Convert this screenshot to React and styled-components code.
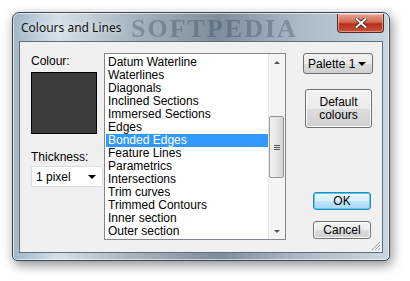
import React from "react";
import styled, { createGlobalStyle } from "styled-components";

const GlobalStyle = createGlobalStyle`
  html, body {
    margin: 0;
    padding: 0;
    background: #ffffff;
  }
  body {
    width: 410px;
    height: 281px;
    overflow: hidden;
    font-family: "Liberation Sans", Arial, sans-serif;
  }
`;

const Page = styled.div`
  padding: 12px 0 0 12px;
`;

const Window = styled.div`
  position: relative;
  width: 378px;
  height: 249px;
  box-sizing: border-box;
  border: 1px solid #3a4a58;
  border-radius: 7px 7px 5px 5px;
  background: linear-gradient(
    90deg,
    #9fb6c8 0%,
    #d5e0e9 12%,
    #aab8c3 30%,
    #7d8d99 55%,
    #a9b8c4 75%,
    #c9d6e1 100%
  );
  box-shadow: 2px 4px 12px rgba(0, 0, 0, 0.45), inset 0 0 0 1px rgba(255, 255, 255, 0.6);
  display: flex;
  flex-direction: column;
  padding: 0 6px 7px 6px;
`;

const TitleBar = styled.div`
  position: relative;
  height: 28px;
  display: flex;
  align-items: center;
  justify-content: space-between;
`;

const Title = styled.span`
  font-family: "Noto Sans", "Open Sans", sans-serif;
  font-size: 12px;
  color: #111;
  padding-left: 2px;
  position: relative;
  z-index: 1;
  text-shadow: 0 0 6px rgba(255, 255, 255, 0.9);
`;

const Watermark = styled.span`
  position: absolute;
  left: 112px;
  top: 1px;
  font-family: "Liberation Serif", serif;
  font-weight: bold;
  font-size: 26px;
  letter-spacing: 2px;
  color: rgba(40, 55, 70, 0.3);
  filter: blur(0.6px);
`;

const CloseButton = styled.div`
  position: relative;
  z-index: 1;
  width: 45px;
  height: 18px;
  margin-top: -8px;
  margin-right: -1px;
  border: 1px solid #5a2a22;
  border-top: none;
  border-radius: 0 0 4px 4px;
  background: linear-gradient(180deg, #e8a493 0%, #d46a52 45%, #b5301a 55%, #c8533a 100%);
  box-shadow: inset 0 0 0 1px rgba(255, 220, 210, 0.5);
  display: flex;
  align-items: center;
  justify-content: center;
`;

const Client = styled.div`
  flex: 1;
  position: relative;
  background: #f0f0f0;
  border: 1px solid #5e6e7a;
  display: flex;
  padding: 11px 0 0 11px;
  box-sizing: border-box;
`;

const LeftColumn = styled.div`
  width: 71px;
  display: flex;
  flex-direction: column;
`;

const Label = styled.div`
  font-size: 12px;
  color: #000;
  height: 14px;
  line-height: 14px;
  margin-top: ${(p) => p.$top || 0}px;
`;

const Swatch = styled.div`
  width: 64px;
  height: 60px;
  margin-top: 4px;
  background: #3c3c3c;
  border: 1px solid #000;
`;

const Combo = styled.div`
  margin-top: ${(p) => p.$top || 0}px;
  width: ${(p) => p.$width}px;
  height: ${(p) => p.$height}px;
  box-sizing: border-box;
  display: flex;
  align-items: center;
  justify-content: space-between;
  padding: 0 6px 0 4px;
  font-size: 12px;
  color: #000;
  border: 1px solid ${(p) => (p.$button ? "#707070" : "#dcdcdc")};
  border-radius: ${(p) => (p.$button ? 3 : 1)}px;
  background: ${(p) =>
    p.$button ? "linear-gradient(180deg, #f2f2f2 0%, #ebebeb 50%, #dddddd 51%, #cfcfcf 100%)" : "#ffffff"};
`;

const Arrow = styled.span`
  width: 0;
  height: 0;
  border-left: 4px solid transparent;
  border-right: 4px solid transparent;
  border-top: 4px solid #000;
`;

const ListBox = styled.div`
  margin-left: 2px;
  width: 182px;
  height: 187px;
  box-sizing: border-box;
  border: 1px solid #828790;
  background: #fff;
  display: flex;
`;

const Items = styled.div`
  flex: 1;
  padding: 2px 0 0 1px;
`;

const Item = styled.div`
  height: 13px;
  line-height: 13px;
  font-size: 12px;
  padding-left: 2px;
  color: ${(p) => (p.$selected ? "#fff" : "#000")};
  background: ${(p) => (p.$selected ? "#3399ff" : "transparent")};
  white-space: nowrap;
`;

const ScrollBar = styled.div`
  width: 16px;
  background: #f4f4f4;
  border-left: 1px solid #e8e8e8;
  display: flex;
  flex-direction: column;
  align-items: center;
`;

const ScrollArrow = styled.div`
  height: 16px;
  width: 100%;
  display: flex;
  align-items: center;
  justify-content: center;
`;

const ArrowUp = styled.span`
  width: 0;
  height: 0;
  border-left: 3px solid transparent;
  border-right: 3px solid transparent;
  border-bottom: 3px solid #555;
`;

const ArrowDown = styled(ArrowUp)`
  border-bottom: none;
  border-top: 3px solid #555;
`;

const Track = styled.div`
  flex: 1;
  width: 100%;
  display: flex;
  flex-direction: column;
`;

const Thumb = styled.div`
  margin-top: ${(p) => p.$top}px;
  height: ${(p) => p.$height}px;
  width: 15px;
  box-sizing: border-box;
  border: 1px solid #979797;
  border-radius: 2px;
  background: linear-gradient(90deg, #f2f2f2 0%, #e6e6e6 50%, #d3d3d3 100%);
  display: flex;
  flex-direction: column;
  align-items: center;
  justify-content: center;
  gap: 1px;
`;

const Grip = styled.span`
  width: 6px;
  height: 1px;
  background: #555;
`;

const RightColumn = styled.div`
  margin-left: 17px;
  width: 70px;
  display: flex;
  flex-direction: column;
  align-items: flex-end;
`;

const Button = styled.div`
  margin-top: ${(p) => p.$top || 0}px;
  margin-right: ${(p) => p.$right || 0}px;
  width: ${(p) => p.$width}px;
  height: ${(p) => p.$height}px;
  box-sizing: border-box;
  border: 1px solid ${(p) => (p.$default ? "#3c7fb1" : "#707070")};
  border-radius: 3px;
  background: ${(p) =>
    p.$default
      ? "linear-gradient(180deg, #eaf6fd 0%, #d9f0fc 50%, #bee6fd 51%, #a7d9f5 100%)"
      : "linear-gradient(180deg, #f2f2f2 0%, #ebebeb 50%, #dddddd 51%, #cfcfcf 100%)"};
  box-shadow: ${(p) => (p.$default ? "inset 0 0 0 1px #48d1f9" : "inset 0 0 0 1px #fcfcfc")};
  display: flex;
  align-items: center;
  justify-content: center;
  text-align: center;
  font-size: 12px;
  line-height: 13px;
  color: #000;
`;

const ResizeGrip = styled.svg`
  position: absolute;
  right: 1px;
  bottom: 1px;
`;

const items = [
  "Datum Waterline",
  "Waterlines",
  "Diagonals",
  "Inclined Sections",
  "Immersed Sections",
  "Edges",
  "Bonded Edges",
  "Feature Lines",
  "Parametrics",
  "Intersections",
  "Trim curves",
  "Trimmed Contours",
  "Inner section",
  "Outer section",
];

export default function App() {
  return (
    <Page>
      <GlobalStyle />
      <Window>
        <TitleBar>
          <Watermark>SOFTPEDIA</Watermark>
          <Title>Colours and Lines</Title>
          <CloseButton>
            <svg width="12" height="10" viewBox="0 0 12 10">
              <path
                d="M1.5 1 L10.5 9 M10.5 1 L1.5 9"
                stroke="#3a1a14"
                strokeWidth="3.6"
                strokeLinecap="square"
              />
              <path
                d="M1.5 1 L10.5 9 M10.5 1 L1.5 9"
                stroke="#ffffff"
                strokeWidth="2"
                strokeLinecap="square"
              />
            </svg>
          </CloseButton>
        </TitleBar>
        <Client>
          <LeftColumn>
            <Label $top={1}>Colour:</Label>
            <Swatch />
            <Label $top={16}>Thickness:</Label>
            <Combo $top={2} $width={72} $height={21}>
              1 pixel
              <Arrow />
            </Combo>
          </LeftColumn>
          <ListBox>
            <Items>
              {items.map((it) => (
                <Item key={it} $selected={it === "Bonded Edges"}>
                  {it}
                </Item>
              ))}
            </Items>
            <ScrollBar>
              <ScrollArrow>
                <ArrowUp />
              </ScrollArrow>
              <Track>
                <Thumb $top={46} $height={62}>
                  <Grip />
                  <Grip />
                  <Grip />
                </Thumb>
              </Track>
              <ScrollArrow>
                <ArrowDown />
              </ScrollArrow>
            </ScrollBar>
          </ListBox>
          <RightColumn>
            <Combo $button $width={70} $height={21}>
              Palette 1
              <Arrow />
            </Combo>
            <Button $top={15} $right={1} $width={67} $height={39}>
              Default
              <br />
              colours
            </Button>
            <Button $default $top={64} $right={2} $width={58} $height={18}>
              OK
            </Button>
            <Button $top={11} $right={2} $width={58} $height={18}>
              Cancel
            </Button>
          </RightColumn>
          <ResizeGrip width="12" height="12" viewBox="0 0 12 12">
            <path d="M11 3 L3 11 M11 6 L6 11 M11 9 L9 11" stroke="#a0a0a0" strokeWidth="1" />
          </ResizeGrip>
        </Client>
      </Window>
    </Page>
  );
}
